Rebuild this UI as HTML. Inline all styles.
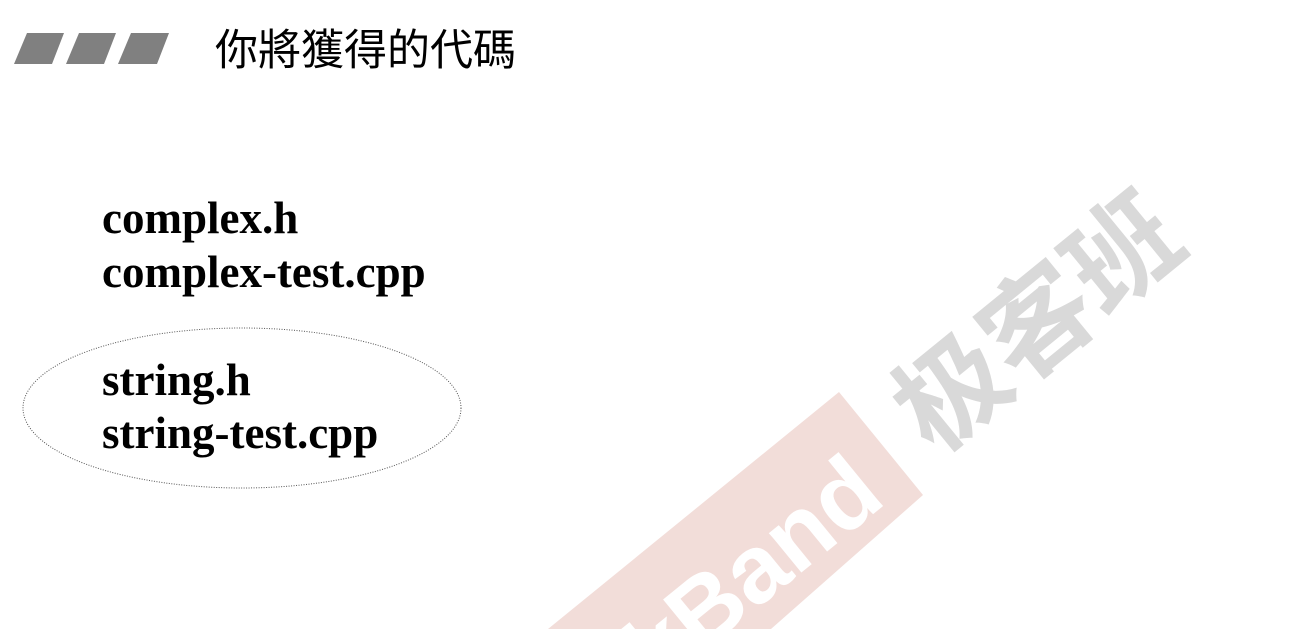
<!DOCTYPE html>
<html><head><meta charset="utf-8"><style>
html,body{margin:0;padding:0;background:#fff;}
body{width:1302px;height:629px;position:relative;overflow:hidden;}
.t{position:absolute;font-family:"Liberation Serif",serif;font-weight:bold;font-size:45px;color:#000;left:102px;line-height:1;}
.title{position:absolute;left:215px;top:30px;font-family:"Liberation Sans","Noto Sans CJK TC",sans-serif;font-size:43px;line-height:1;color:#000;}
</style></head><body>
<svg width="1302" height="629" style="position:absolute;left:0;top:0">
<polygon points="27,33 64,33 52,64 14,64" fill="#808080"/>
<polygon points="79,33 116,33 104,64 66,64" fill="#808080"/>
<polygon points="131,33 169,33 157,64 118,64" fill="#808080"/>
<polygon points="839,392 923,495 771,629 548,629" fill="#f2ddd9"/>
<text transform="matrix(0.775,-0.631,0.63,0.77,888,502)" text-anchor="end" font-family="Liberation Sans,sans-serif" font-weight="bold" font-size="97" fill="#fff">GeekBand</text>
<text transform="matrix(0.775,-0.631,0.63,0.77,1190,248)" text-anchor="end" font-family="Liberation Sans,Noto Sans CJK SC,sans-serif" font-weight="bold" font-size="110" fill="#d9d9d9">极客班</text>
<ellipse cx="242" cy="408" rx="219" ry="80" fill="none" stroke="#555" stroke-width="1" stroke-dasharray="1,1.5"/>
</svg>
<div class="title">你將獲得的代碼</div>
<div class="t" style="top:196px">complex.h</div>
<div class="t" style="top:250px">complex-test.cpp</div>
<div class="t" style="top:358px">string.h</div>
<div class="t" style="top:411px">string-test.cpp</div>
</body></html>
